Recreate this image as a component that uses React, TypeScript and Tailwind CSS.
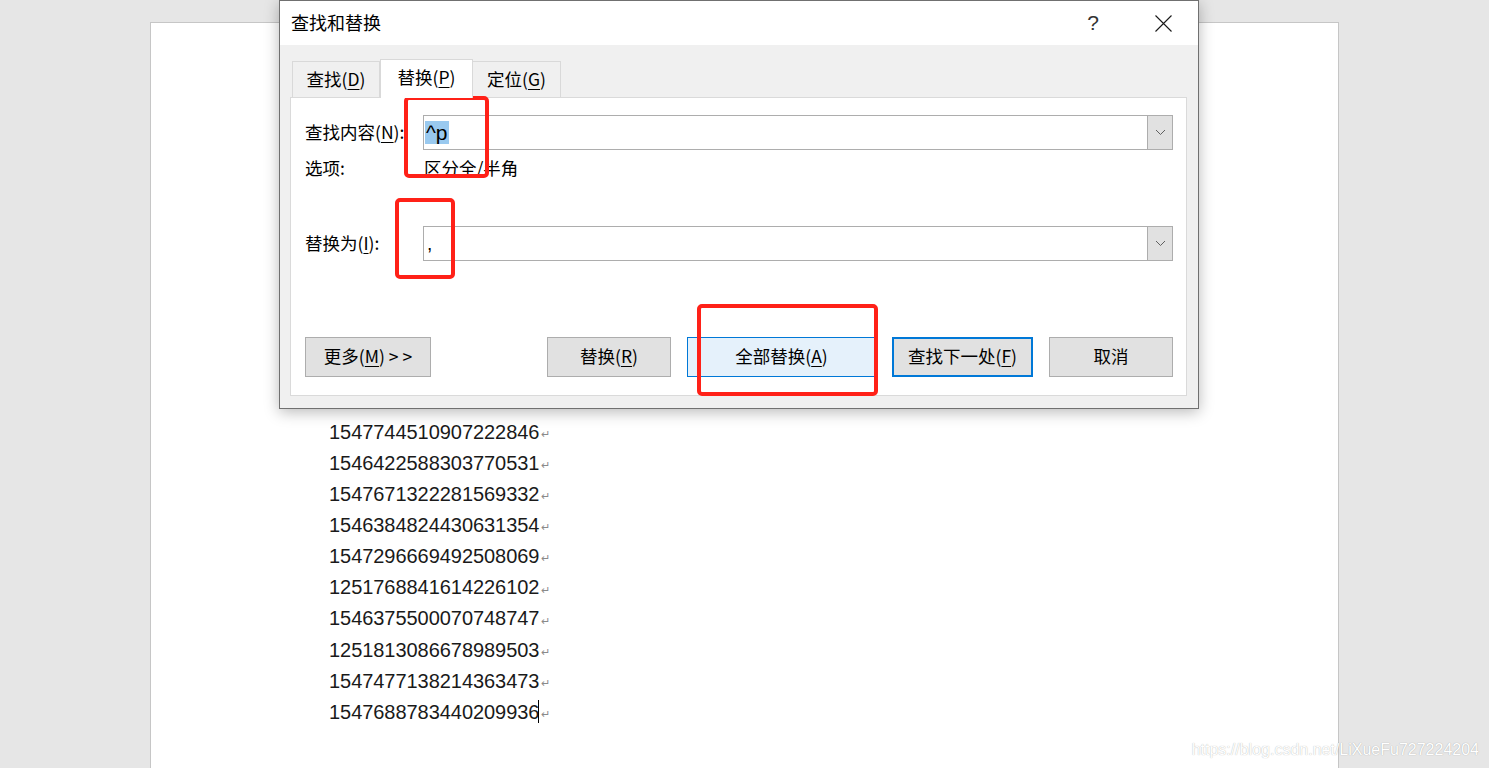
const numbers = [
  "1547744510907222846",
  "1546422588303770531",
  "1547671322281569332",
  "1546384824430631354",
  "1547296669492508069",
  "1251768841614226102",
  "1546375500070748747",
  "1251813086678989503",
  "1547477138214363473",
  "1547688783440209936",
];

const cjk = "font-['Noto_Sans_CJK_SC','Noto_Sans',sans-serif]";

function Key({ children }: { children: React.ReactNode }) {
  return <span className="underline underline-offset-[3px] decoration-1">{children}</span>;
}

function Combo({ children }: { children?: React.ReactNode }) {
  return (
    <div className="flex-1 h-[35px] flex border border-[#adadad] bg-white">
      <div className="flex-1 flex items-center pl-[1px]">{children}</div>
      <div className="w-[26px] -my-px -mr-px border border-[#adadad] bg-[#e1e1e1] flex items-center justify-center">
        <svg width="11" height="7" viewBox="0 0 11 7">
          <path d="M1 1 L5.5 5.5 L10 1" fill="none" stroke="#606060" strokeWidth="1" />
        </svg>
      </div>
    </div>
  );
}

function Btn({ children, className }: { children: React.ReactNode; className: string }) {
  return (
    <div className={"h-[40px] flex items-center justify-center pb-[3px] text-[17.5px] leading-none " + className}>
      {children}
    </div>
  );
}

export default function App() {
  return (
    <div className="relative w-[1489px] h-[768px] overflow-hidden bg-[#e6e6e6]">
      {/* document page */}
      <div className="ml-[150px] mt-[22px] w-[1189px] h-[800px] bg-white border-x border-t border-[#c6c6c6] pl-[178px] pt-[393px] font-['Liberation_Sans',Arial,sans-serif] text-[20px] text-[#1a1a1a]">
        {numbers.map((n, i) => (
          <div key={i} className="h-[31.15px] flex items-center">
            <span className="tracking-[-0.05px]">{n}</span>
            {i === numbers.length - 1 && <span className="w-px h-[23px] bg-black -ml-px" />}
            <span className="ml-[2px] mt-[5px] text-[11px] text-[#8a8a8a]">↵</span>
          </div>
        ))}
      </div>

      {/* find & replace dialog */}
      <div className={"absolute left-[279px] top-0 w-[920px] h-[409px] border border-[#707070] bg-[#f0f0f0] shadow-[0_3px_14px_rgba(0,0,0,0.28)] flex flex-col text-black " + cjk}>
        <div className="h-[44px] bg-white flex items-center pl-[11px] pr-[26px] shrink-0">
          <span className="text-[18px] leading-none pb-[2px]">查找和替换</span>
          <span className="ml-auto text-[21px] leading-none text-[#333] font-['Liberation_Sans',sans-serif] pb-[2px]">?</span>
          <svg className="ml-[56px]" width="17" height="17" viewBox="0 0 17 17">
            <path d="M0.5 0.5 L16.5 16.5 M16.5 0.5 L0.5 16.5" stroke="#1a1a1a" strokeWidth="1.1" />
          </svg>
        </div>

        <div className="h-[52px] flex items-end pl-[12px] shrink-0 text-[17.5px] leading-none">
          <div className="w-[88px] h-[36px] border border-b-0 border-[#d9d9d9] flex items-center justify-center pb-[2px]">
            查找(<Key>D</Key>)
          </div>
          <div className="relative z-10 w-[93px] h-[39px] -mb-px bg-white border border-b-0 border-[#d9d9d9] flex items-center justify-center pb-[4px]">
            替换(<Key>P</Key>)
          </div>
          <div className="w-[88px] h-[36px] border border-b-0 border-l-0 border-[#d9d9d9] flex items-center justify-center pb-[2px]">
            定位(<Key>G</Key>)
          </div>
        </div>

        <div className="ml-[10px] mr-[11px] h-[299px] bg-white border border-[#dadada] pl-[14px] pr-[13px] pt-[17px] flex flex-col text-[17.5px] leading-none">
          <div className="flex items-center">
            <div className="w-[118px] pb-[2px]">查找内容(<Key>N</Key>):</div>
            <Combo>
              <span className="bg-[#99c9ef] h-[23px] px-[1px] flex items-center text-[21px] font-['Liberation_Sans',sans-serif]">^p</span>
            </Combo>
          </div>
          <div className="flex items-center h-[24px] mt-[6px]">
            <div className="w-[119px]">选项:</div>
            <div>区分全/半角</div>
          </div>
          <div className="flex items-center mt-[46px]">
            <div className="w-[118px] pb-[2px]">替换为(<Key>I</Key>):</div>
            <Combo>
              <span className="pl-[2px] text-[19px] font-['Liberation_Sans',sans-serif]">,</span>
            </Combo>
          </div>
          <div className="flex items-center mt-[76px]">
            <Btn className="w-[126px] bg-[#e1e1e1] border border-[#adadad]">
              <span>更多(<Key>M</Key>) &gt; &gt;</span>
            </Btn>
            <div className="ml-auto flex items-center gap-[16px]">
              <Btn className="w-[124px] bg-[#e1e1e1] border border-[#adadad]">
                替换(<Key>R</Key>)
              </Btn>
              <Btn className="w-[189px] bg-[#e5f1fb] border border-[#0078d7]">
                全部替换(<Key>A</Key>)
              </Btn>
              <Btn className="w-[141px] bg-[#e1e1e1] border-2 border-[#0078d7]">
                查找下一处(<Key>F</Key>)
              </Btn>
              <Btn className="w-[124px] bg-[#e1e1e1] border border-[#adadad]">
                取消
              </Btn>
            </div>
          </div>
        </div>

        {/* red highlight boxes */}
        <div className="absolute left-[124px] top-[95px] w-[85px] h-[82px] border-[4px] border-[#ff2118] rounded-[5px]" />
        <div className="absolute left-[115px] top-[197px] w-[60px] h-[81px] border-[4px] border-[#ff2118] rounded-[5px]" />
        <div className="absolute left-[417px] top-[303px] w-[181px] h-[92px] border-[4px] border-[#ff2118] rounded-[5px]" />
      </div>

      {/* watermark */}
      <div className="absolute right-[10px] bottom-[10px] text-[16px] leading-none text-white font-['Liberation_Sans',sans-serif] [text-shadow:0_0_1px_rgba(0,0,0,0.35)]">
        https://blog.csdn.net/LiXueFu727224204
      </div>
    </div>
  );
}
